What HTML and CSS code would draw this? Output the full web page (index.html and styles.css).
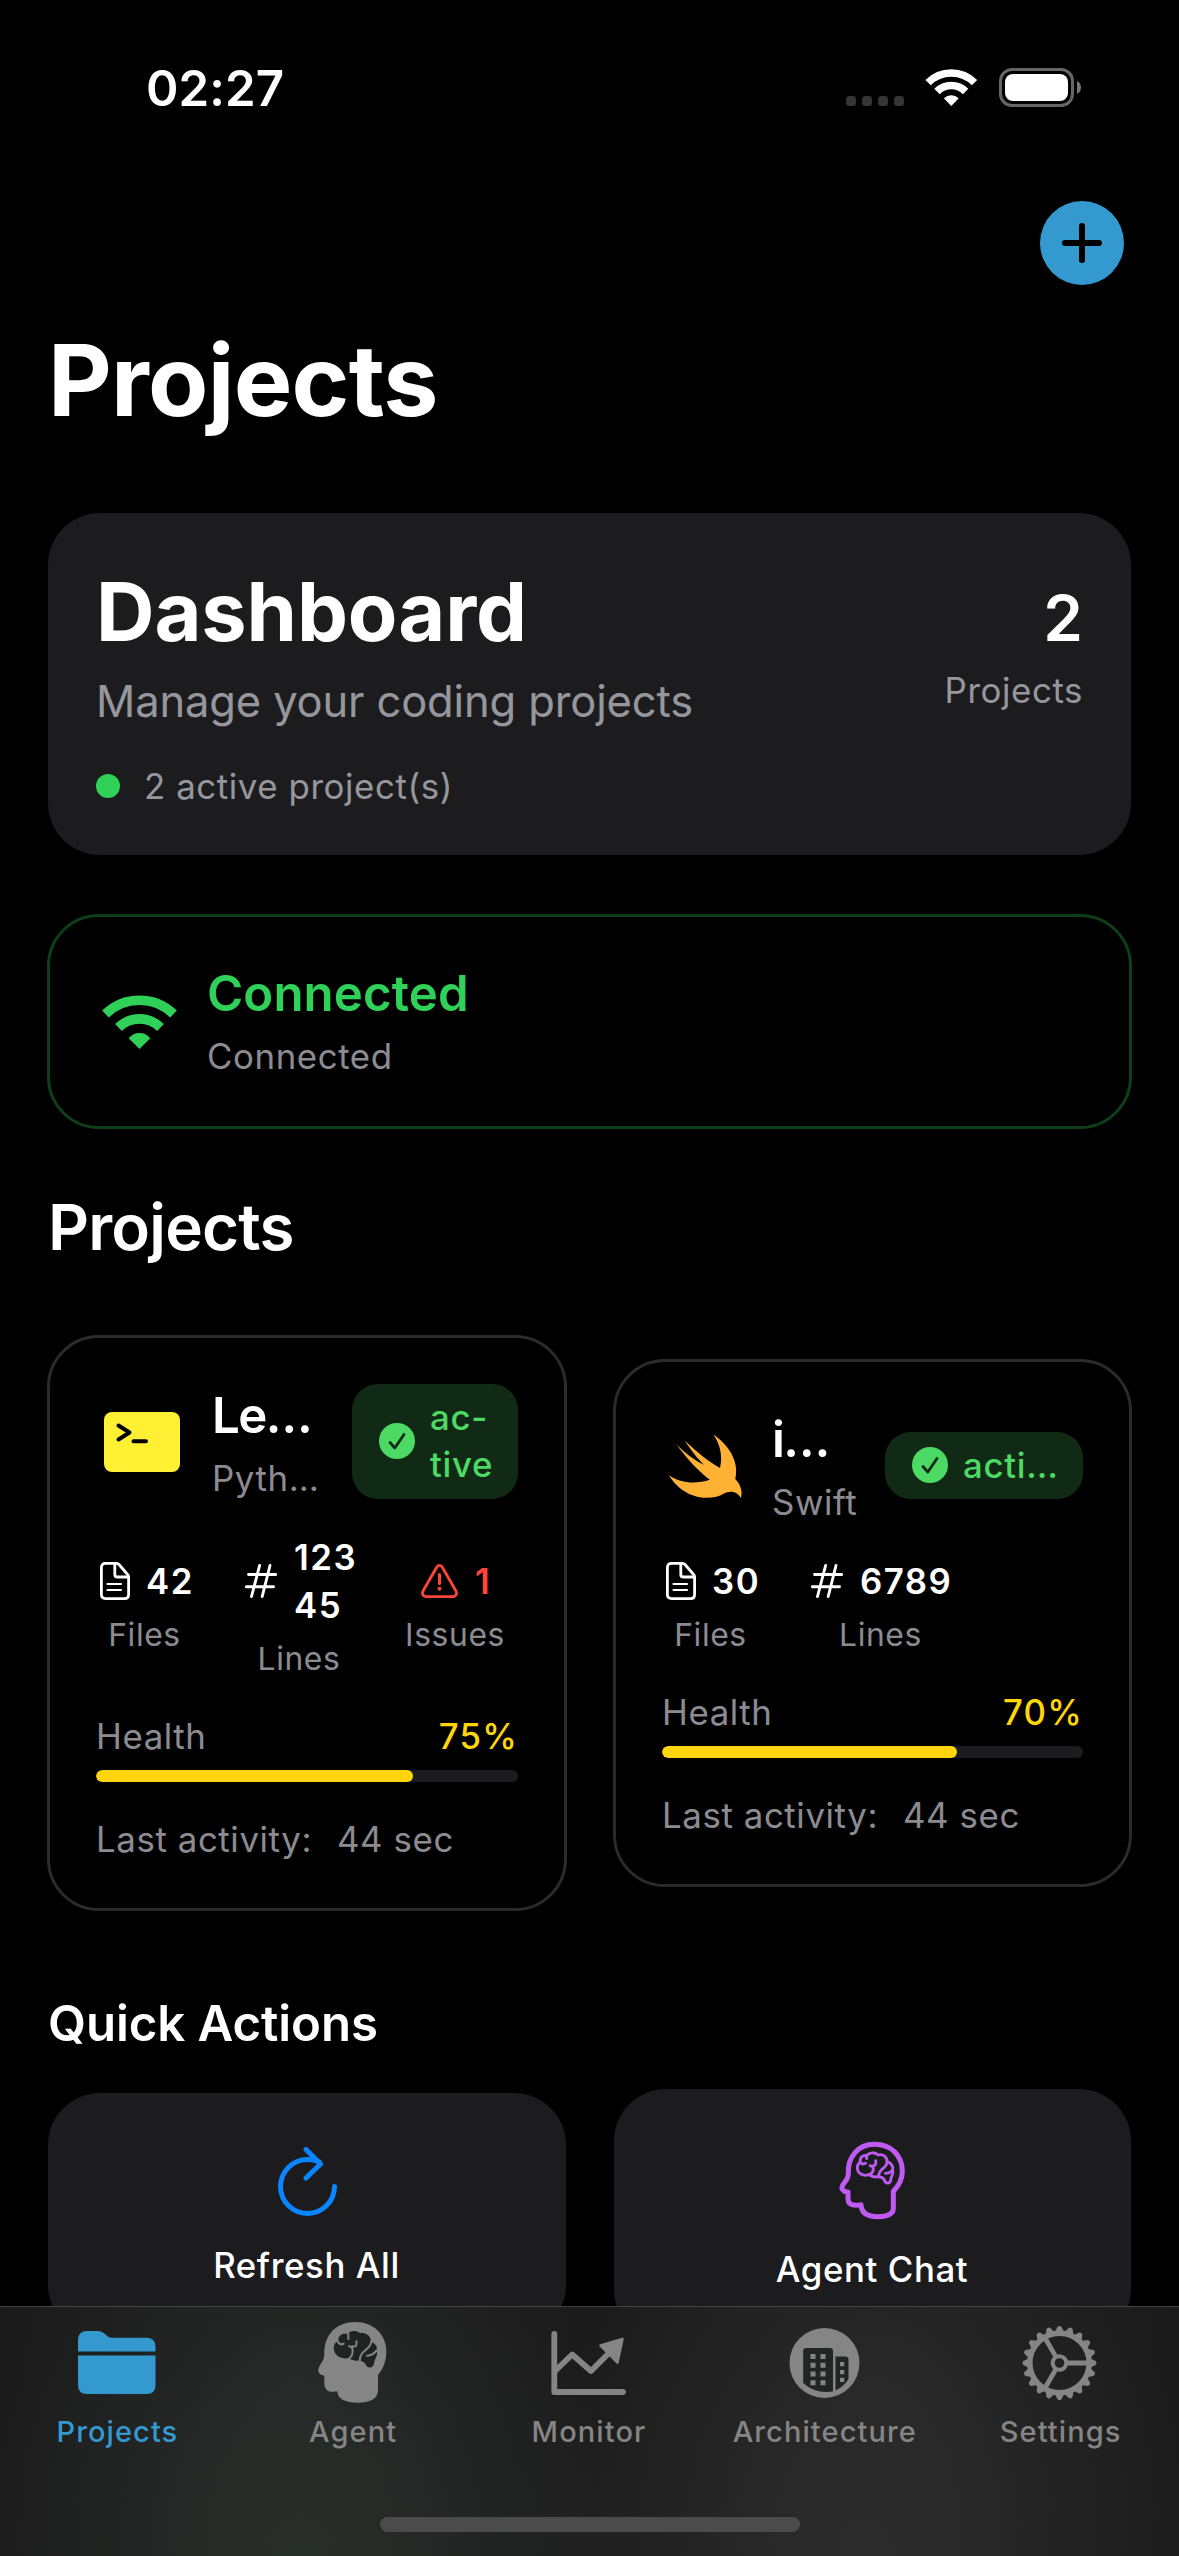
FILE: index.html
```html
<!DOCTYPE html>
<html lang="en">
<head>
<meta charset="utf-8">
<title>Projects</title>
<link rel="stylesheet" href="styles.css">
</head>
<body>
<svg class="defs" width="0" height="0" aria-hidden="true">
  <symbol id="file" viewBox="0 0 30 38">
    <g fill="none" stroke="currentColor" stroke-width="2.8" stroke-linejoin="round" stroke-linecap="round">
      <path d="M5.5 1.4H16.5Q18 1.4 19 2.5L27.6 12.5Q28.6 13.6 28.6 15V32.5Q28.6 36.6 24.5 36.6H5.5Q1.4 36.6 1.4 32.5V5.5Q1.4 1.4 5.5 1.4Z"/>
      <path d="M14.8 2V12.5Q14.8 15 17.3 15H28"/>
      <path d="M7.5 22H21M7.5 28H21" stroke-width="2.2"/>
    </g>
  </symbol>
  <symbol id="hash" viewBox="0 0 32 34">
    <path d="M14.600 1.500L6.500 32.500M25 1.500L17.200 32.500M3.500 10.500H30.600M1.400 22.800H28.500" fill="none" stroke="currentColor" stroke-width="2.900" stroke-linecap="round"/>
  </symbol>
  <symbol id="check" viewBox="0 0 36 36">
    <circle cx="18" cy="18" r="18" fill="#4cd964"/>
    <path d="M11 19.500L15.800 25L25 11.500" fill="none" stroke="#102a15" stroke-width="2.800" stroke-linecap="round" stroke-linejoin="round"/>
  </symbol>
</svg>

<header class="status">
  <time class="clock">02:27</time>
  <svg width="270" height="77" viewBox="0 0 270 77">
    <g fill="#353535">
      <rect x="16" y="46" width="10" height="10" rx="3.500"/><rect x="32" y="46" width="10" height="10" rx="3.500"/>
      <rect x="48" y="46" width="10" height="10" rx="3.500"/><rect x="64" y="46" width="10" height="10" rx="3.500"/>
    </g>
    <g fill="none" stroke="#fff" stroke-width="7.600">
      <path d="M98.100 32.600A32.800 32.800 0 0 1 144.500 32.600"/>
      <path d="M107 41.500A20.200 20.200 0 0 1 135.600 41.500"/>
    </g>
    <path d="M121.300 56L113.900 48.200A10.800 10.800 0 0 1 128.700 48.200Z" fill="#fff"/>
    <rect x="170.500" y="19.500" width="72" height="36" rx="11.500" fill="none" stroke="#666" stroke-width="3"/>
    <rect x="175" y="24" width="63" height="27" rx="8" fill="#fff"/>
    <path d="M247 31Q251 33 251 37.500T247 44Z" fill="#777"/>
  </svg>
</header>

<nav class="nav">
  <button class="add" aria-label="Add project">
    <svg width="84" height="84" viewBox="0 0 84 84"><path d="M42 25V59M25 42H59" stroke="#000" stroke-width="6" stroke-linecap="round"/></svg>
  </button>
</nav>

<main class="content">
  <h1 class="title">Projects</h1>

  <section class="dashboard">
    <div class="dash-top">
      <div>
        <h2 class="dash-title">Dashboard</h2>
        <p class="dash-sub">Manage your coding projects</p>
      </div>
      <div class="dash-count">
        <span class="count">2</span>
        <span class="caption">Projects</span>
      </div>
    </div>
    <div class="dash-active"><i class="dot"></i><span class="caption">2 active project(s)</span></div>
  </section>

  <section class="connection">
    <svg width="75" height="54" viewBox="0 0 75 54">
      <g fill="none" stroke="#30d158" stroke-width="9.600">
        <path d="M3.500 19A48.900 48.900 0 0 1 71.500 19"/>
        <path d="M16.500 32.500A30 30 0 0 1 58.500 32.500"/>
      </g>
      <path d="M37.500 54L26.700 43.200Q31 38 37.500 38T48.300 43.200Z" fill="#30d158"/>
    </svg>
    <div>
      <p class="conn-title">Connected</p>
      <p class="caption">Connected</p>
    </div>
  </section>

  <h2 class="section-title">Projects</h2>

  <section class="projects">
    <article class="project">
      <div class="head">
        <div class="lang terminal">
          <svg width="76" height="60" viewBox="0 0 76 60">
            <rect width="76" height="60" rx="8" fill="#fff033"/>
            <path d="M14.500 13.500L25.500 20.500L14.500 27.500M29.500 29.200H42" fill="none" stroke="#000" stroke-width="4" stroke-linecap="round" stroke-linejoin="round"/>
          </svg>
        </div>
        <div class="name">
          <h3>Le…</h3>
          <p class="caption">Pyth…</p>
        </div>
        <div class="badge tall">
          <svg width="36" height="36"><use href="#check"/></svg>
          <span>ac-<br>tive</span>
        </div>
      </div>
      <div class="stats">
        <div class="stat files">
          <div class="value"><svg width="30" height="38"><use href="#file"/></svg><b>42</b></div>
          <div class="label">Files</div>
        </div>
        <div class="stat lines-narrow">
          <div class="value"><svg width="32" height="34"><use href="#hash"/></svg><b>123<br>45</b></div>
          <div class="label">Lines</div>
        </div>
        <div class="stat issues">
          <div class="value">
            <svg width="37" height="34" viewBox="0 0 37 34">
              <path d="M15.700 3.200Q18.500 -0.300 21.300 3.200L35 27Q36.800 32 32 32.600H5Q0.200 32 2 27Z" fill="none" stroke="currentColor" stroke-width="2.800" stroke-linejoin="round"/>
              <path d="M18.500 10.500V19.500" stroke="currentColor" stroke-width="3" stroke-linecap="round"/><circle cx="18.500" cy="24.800" r="2" fill="currentColor"/>
            </svg><b>1</b></div>
          <div class="label">Issues</div>
        </div>
      </div>
      <div class="health"><span class="caption">Health</span><span class="pct">75%</span></div>
      <div class="bar"><div class="fill" style="width:75%"></div></div>
      <div class="activity caption"><span>Last activity:</span><span>44 sec</span></div>
    </article>

    <article class="project">
      <div class="head">
        <div class="lang bird">
          <svg width="74" height="65" viewBox="0 0 74 65">
            <path fill="#ffb133" d="M44.300 .500C60 11 70.500 28 66.300 45C73 52 73.500 60 71.800 63.800C67 56 60 57 55 59.500C50 62.500 45 63.800 38.200 63.800C20 64 7 53 0 41.300C12 50 28 50 40.800 45.800C28 36 16 22 7.500 10.400C15 18 25 26 35 30.700C28 24 21 15 16 6.700C28 18 40 28 51 34C54 22 51 10 44.300 .500Z"/>
          </svg>
        </div>
        <div class="name">
          <h3>i…</h3>
          <p class="caption">Swift</p>
        </div>
        <div class="badge wide">
          <svg width="36" height="36"><use href="#check"/></svg>
          <span>acti…</span>
        </div>
      </div>
      <div class="stats">
        <div class="stat files">
          <div class="value"><svg width="30" height="38"><use href="#file"/></svg><b>30</b></div>
          <div class="label">Files</div>
        </div>
        <div class="stat lines-wide">
          <div class="value"><svg width="32" height="34"><use href="#hash"/></svg><b>6789</b></div>
          <div class="label">Lines</div>
        </div>
      </div>
      <div class="health"><span class="caption">Health</span><span class="pct">70%</span></div>
      <div class="bar"><div class="fill" style="width:70%"></div></div>
      <div class="activity caption"><span>Last activity:</span><span>44 sec</span></div>
    </article>
  </section>

  <h2 class="quick-title">Quick Actions</h2>
  <section class="actions">
    <button class="action refresh">
      <svg width="59" height="69" viewBox="0 0 59 69">
        <path d="M56.500 39.500A27 27 0 1 1 29.500 12.500Q36 12.500 41 14.800" fill="none" stroke="#0a84ff" stroke-width="5" stroke-linecap="round"/>
        <path d="M28 2.500L42.500 17L28 31" fill="none" stroke="#0a84ff" stroke-width="5" stroke-linecap="round" stroke-linejoin="round"/>
      </svg>
      <span>Refresh All</span>
    </button>
    <button class="action chat">
      <svg width="85" height="100" viewBox="0 0 255 300">
        <g fill="none" stroke="#bf5af2" stroke-linecap="round" stroke-linejoin="round">
          <path stroke-width="15" d="M133 37C183 37 217 70 217 118C217 143 206 162 190 178V228C190 248 170 254 143 254C112 254 94 243 93 218C72 222 54 220 54 200V180C40 181 32 170 38 160C45 148 55 141 55 126C52 75 84 37 133 37Z"/>
          <g stroke-width="8.500">
            <path d="M91 91C88 77 97 69 110 70C120 60 136 60 144 69C158 65 171 74 171 88C184 93 191 104 188 114C191 124 186 130 183 138C183 157 167 157 163 144C160 135 152 135 142 134C132 137 124 133 116 128C100 134 82 124 82 107C82 98 86 94 91 91Z"/>
            <path d="M91 91Q97 99 107 94M110 70V80M129 102Q140 100 137 86M120 101Q131 103 130 113Q128 124 118 128M171 88C172 112 146 106 146 133M166 124Q181 124 187 114"/>
          </g>
        </g>
      </svg>
      <span>Agent Chat</span>
    </button>
  </section>
</main>

<footer class="tabbar">
  <div class="tabs">
    <a class="tab active">
      <svg width="90" height="100" viewBox="0 0 90 100" fill="currentColor">
        <path d="M5 39.500V28Q5 19 14 19H25Q29 19 32 22L35 24.500Q36.500 25.700 39 25.700H73Q82.500 25.700 82.500 35V39.500Z"/>
        <path d="M5 43.500H82.500V73Q82.500 82 73.500 82H14Q5 82 5 73Z"/>
      </svg>
      <span>Projects</span>
    </a>
    <a class="tab">
      <svg width="90" height="100" viewBox="-4 0 270 300">
        <path fill="currentColor" d="M135 30C190 30 228 68 228 118C228 147 219 170 203 189V235C203 262 178 272 142 272C105 272 82 262 81 238C62 241 43 240 42 215V191C28 190 20 180 26 166C32 152 42 145 42 125C42 65 80 30 135 30Z"/>
        <path fill="#212322" d="M84 86C83 70 96 63 110 66C120 54 140 54 149 64C167 60 182 73 182 89C196 94 203 106 199 118C203 131 195 139 192 150C191 170 171 172 165 156C161 147 152 148 146 146C134 148 124 144 115 139C91 142 70 129 70 107C70 97 76 89 84 86Z"/>
        <path fill="none" stroke="currentColor" stroke-width="6" stroke-linecap="round" d="M82 89Q90 101 100 95M114 64V81M126 103Q142 106 138 88M116 103Q127 104 127 116Q127 131 117 139M183 86C183 115 148 112 148 147M170 131Q187 131 198 116"/>
      </svg>
      <span>Agent</span>
    </a>
    <a class="tab">
      <svg width="90" height="100" viewBox="0 0 90 100">
        <g fill="none" stroke="currentColor" stroke-linecap="round" stroke-linejoin="round">
          <path stroke-width="5.800" d="M10.300 22V80H79"/>
          <path stroke-width="5.800" d="M11 59L28.200 42.500L47 59L66 40"/>
        </g>
        <path d="M78.500 27L56.500 33.500L73.500 50.500Z" fill="currentColor" stroke="currentColor" stroke-width="2.500" stroke-linejoin="round"/>
      </svg>
      <span>Monitor</span>
    </a>
    <a class="tab">
      <svg width="90" height="100" viewBox="0 0 90 100">
        <circle cx="44.500" cy="51" r="35" fill="currentColor"/>
        <path fill="#232424" d="M23.200 71V39Q23.200 36 26.200 36H50Q53 36 53 39V79.500Q35 82 23.200 71ZM55.500 44.500H65.500Q68.500 44.500 68.500 47.500V67Q64 74.500 55.500 78.500Z"/>
        <path fill="currentColor" d="M30.500 42h5v5h-5zM40.500 42h5v5h-5zM30.500 50.800h5v5h-5zM40.500 50.800h5v5h-5zM30.500 59.500h5v5h-5zM40.500 59.500h5v5h-5zM30.500 68.200h5v5h-5zM40.500 68.200h5v5h-5zM60 50h4.300v4.300h-4.300zM60 58h4.300v4.300h-4.300zM60 65.800h4.300v4.300h-4.300z"/>
      </svg>
      <span>Architecture</span>
    </a>
    <a class="tab">
      <svg width="90" height="100" viewBox="0 0 90 100">
        <g fill="none" stroke="currentColor" transform="translate(43.500 51)">
          <circle r="29.700" stroke-width="5.500"/>
          <circle r="6.800" stroke-width="4"/>
          <path stroke-width="4.800" d="M8 0H28M-4 -6.900L-14.500 -25M-4 6.900L-14.500 25"/>
          <g fill="currentColor" stroke="none">
            <g id="quad">
              <path id="tooth" d="M31 -4.600L36.200 -2Q38 0 36.200 2L31 4.600Z"/>
              <use href="#tooth" transform="rotate(18)"/><use href="#tooth" transform="rotate(36)"/><use href="#tooth" transform="rotate(54)"/><use href="#tooth" transform="rotate(72)"/>
            </g>
            <use href="#quad" transform="rotate(90)"/><use href="#quad" transform="rotate(180)"/><use href="#quad" transform="rotate(270)"/>
          </g>
        </g>
      </svg>
      <span>Settings</span>
    </a>
  </div>
  <div class="home"></div>
</footer>
</body>
</html>
```
FILE: styles.css
```css
* { box-sizing: border-box; }
body {
  margin: 0;
  position: relative;
  width: 1179px;
  height: 2556px;
  overflow: hidden;
  background: #000;
  color: #fff;
  font-family: Inter, "Liberation Sans", sans-serif;
}
h1, h2, h3, p { margin: 0; }
button { border: 0; padding: 0; color: inherit; font: inherit; }
svg { display: block; flex: none; }
.defs { position: absolute; }

.status {
  height: 177px;
  padding: 0 79px 0 146px;
  display: flex;
  align-items: center;
  justify-content: space-between;
}
.clock { padding-bottom: 2px; font-size: 49.2px; font-weight: 600; letter-spacing: .1px; }

.nav {
  height: 132px;
  padding-right: 55px;
  display: flex;
  align-items: center;
  justify-content: flex-end;
}
.add { width: 84px; height: 84px; border-radius: 50%; background: #3399cf; }

.content { padding: 0 48px; }
.title {
  font-size: 98.5px;
  font-weight: 700;
  line-height: 144px;
  letter-spacing: -.75px;
}
.caption {
  font-size: 34.8px;
  line-height: 48px;
  letter-spacing: .6px;
  color: rgba(235, 235, 245, .6);
}

.dashboard {
  margin-top: 60px;
  height: 342px;
  padding: 48px;
  border-radius: 52px;
  background: #1c1c1e;
}
.dash-top { display: flex; align-items: center; justify-content: space-between; }
.dash-title { font-size: 81px; font-weight: 700; line-height: 102px; letter-spacing: -.1px; }
.dash-sub {
  margin-top: 8px;
  font-size: 43.5px;
  line-height: 60px;
  letter-spacing: -.14px;
  color: rgba(235, 235, 245, .6);
}
.dash-count { display: flex; flex-direction: column; align-items: flex-end; gap: 9px; }
.count { font-size: 63.7px; font-weight: 600; line-height: 78px; }
.dash-active { display: flex; align-items: center; gap: 24px; margin-top: 31px; }
.dot { width: 24px; height: 24px; border-radius: 50%; background: #30d158; }

.connection {
  margin: 59px -1px 0;
  height: 215px;
  padding-left: 52px;
  border: 3px solid #0e3f1a;
  border-radius: 52px;
  display: flex;
  align-items: center;
  gap: 30px;
}
.conn-title {
  margin: -2px 0 6px;
  font-size: 49.2px;
  font-weight: 600;
  line-height: 66px;
  letter-spacing: .11px;
  color: #30d158;
}
.connection .caption { margin-bottom: 2px; }

.section-title {
  margin-top: 59px;
  font-size: 63.7px;
  font-weight: 600;
  line-height: 78px;
  letter-spacing: -.8px;
}

.projects {
  margin: 69px -1px 0;
  display: grid;
  grid-template-columns: 520px 519px;
  justify-content: space-between;
  align-items: center;
}
.project {
  padding: 44px 46px 45px;
  border: 3px solid #2b2b2d;
  border-radius: 52px;
}
.head { display: flex; align-items: center; height: 120px; }
.lang { padding-left: 8px; margin-right: 24px; }
.terminal { width: 92px; }
.bird { width: 86px; padding-left: 7px; }
.name { flex: 1; display: flex; flex-direction: column; gap: 6px; }
.name h3 { font-size: 49.2px; font-weight: 600; line-height: 66px; letter-spacing: -1.6px; }
.badge {
  display: flex;
  align-items: center;
  gap: 15px;
  margin-bottom: 2px;
  padding-left: 27px;
  border-radius: 26px;
  background: #102a15;
  color: #4cd964;
  font-size: 34.8px;
  font-weight: 500;
  line-height: 47px;
  letter-spacing: .7px;
}
.tall { width: 166px; height: 115px; }
.wide { width: 198px; height: 67px; }

.stats { margin-top: 31px; display: flex; align-items: center; gap: 48px; }
.stat { display: flex; flex-direction: column; gap: 9px; }
.files { width: 97px; }
.lines-narrow { width: 116px; }
.lines-wide { width: 147px; }
.issues { width: 100px; color: #ff453a; }
.value { display: flex; align-items: center; gap: 17px; padding-left: 4px; }
.files .value { gap: 16px; }
.issues .value { padding-left: 16px; }
.value b { font-size: 34.8px; font-weight: 600; line-height: 48px; letter-spacing: 1.5px; }
.label {
  text-align: center;
  font-size: 31.8px;
  line-height: 42px;
  letter-spacing: .6px;
  color: rgba(235, 235, 245, .6);
}

.health { margin-top: 32px; display: flex; justify-content: space-between; }
.pct {
  margin-right: 0;
  font-size: 34.8px;
  font-weight: 500;
  line-height: 48px;
  letter-spacing: 1.2px;
  color: #ffd60a;
}
.bar { margin-top: 10px; height: 12px; border-radius: 6px; background: #1c1c1e; overflow: hidden; }
.fill { height: 100%; border-radius: 6px; background: #ffd60a; }
.activity { margin-top: 33px; display: flex; gap: 25px; }

.quick-title {
  margin-top: 79px;
  font-size: 49.2px;
  font-weight: 600;
  line-height: 66px;
  letter-spacing: -.09px;
}
.actions {
  margin-top: 33px;
  display: grid;
  grid-template-columns: 518px 517px;
  justify-content: space-between;
  align-items: center;
}
.action {
  display: flex;
  flex-direction: column;
  align-items: center;
  border-radius: 52px;
  background: #1c1c1e;
  font-size: 34.8px;
  font-weight: 500;
  line-height: 48px;
  letter-spacing: .6px;
}
.action span { margin-right: 1px; }
.refresh { height: 244px; padding-top: 54px; gap: 25px; }
.chat { height: 252px; padding-top: 43px; gap: 13px; }

.tabbar {
  position: absolute;
  left: 0;
  bottom: 0;
  width: 1179px;
  height: 250px;
  border-top: 1px solid #434444;
  background:
    radial-gradient(ellipse 330px 330px at 300px 250px, rgba(48, 58, 51, .5), rgba(48, 58, 51, 0)),
    radial-gradient(ellipse 360px 340px at 860px 250px, rgba(58, 58, 58, .4), rgba(58, 58, 58, 0)),
    radial-gradient(ellipse 300px 500px at 300px 100px, rgba(44, 46, 45, .5), rgba(44, 46, 45, 0)),
    radial-gradient(ellipse 300px 500px at 880px 100px, rgba(46, 46, 46, .5), rgba(46, 46, 46, 0)),
    #1b1b1b;
}
.tabs { display: grid; grid-template-columns: repeat(5, 1fr); padding-top: 5px; }
.tab {
  display: flex;
  flex-direction: column;
  align-items: center;
  gap: 2px;
  color: #848584;
  font-size: 29px;
  font-weight: 500;
  line-height: 36px;
  letter-spacing: 1.1px;
}
.tab span { margin-right: 1px; }
.active { color: #3399cf; }
.home { width: 420px; height: 15px; margin: 67px auto 0; border-radius: 8px; background: #4b4b4b; }
```
